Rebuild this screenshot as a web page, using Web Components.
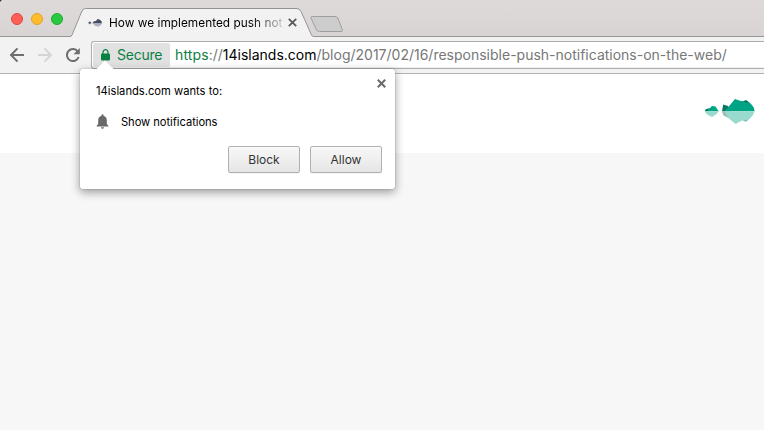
<!DOCTYPE html>
<html lang="en"><head><meta charset="utf-8"><title>Browser window</title>
<style>html,body{margin:0;width:764px;height:430px;overflow:hidden;background:#f7f7f7}</style></head>
<body><browser-window></browser-window>
<script>
const define=(name,html)=>customElements.define(name,class extends HTMLElement{
  constructor(){super();const t=document.createElement('template');t.innerHTML=html;
    this.attachShadow({mode:'open'}).append(t.content.cloneNode(true));}
});

define('window-controls',`<style>
:host{display:flex;gap:8px;padding:13px 0 0 11px;width:60px;box-sizing:border-box;flex:none}
i{box-sizing:border-box;width:12px;height:12px;border-radius:50%;border:1px solid #e2463f;background:#ff5f57;flex:none}
i:nth-of-type(2){background:#ffbd2e;border-color:#e1a325}i:nth-of-type(3){background:#28c940;border-color:#1eac2c}
</style><i></i><i></i><i></i>`);

define('browser-tab',`<style>
:host{display:block;position:relative;width:244px;height:37px;margin-left:10px;flex:none}
.shape{position:absolute;inset:0}
.row{position:relative;display:flex;align-items:center;height:27px;padding:9px 0 0 18px;box-sizing:content-box}
.fav{flex:none;margin-right:6px}
.title{width:174px;white-space:nowrap;overflow:hidden;color:#000;line-height:18px;letter-spacing:.04px;-webkit-mask:linear-gradient(90deg,#000 143px,transparent 180px);mask:linear-gradient(90deg,#000 143px,transparent 180px);flex:none}
.close{flex:none;margin-left:4.5px}
</style>
<svg class="shape" width="244" height="37"><path d="M.5 37L11.2 12Q12.5 8.5 15 8.5H227Q230 8.5 231.3 12L242 35Q242.7 36.5 244 36.5V37Z" fill="#f2f2f2"/><path d="M0 36.5Q1.3 36.5 2 35L11.5 12Q12.8 8.5 15.5 8.5H227Q230 8.5 231.3 12L241.5 35Q242.2 36.5 244 36.5" fill="none" stroke="#949292"/></svg>
<div class="row"><svg class="fav" width="15" height="12" viewBox="0 0 15 12"><path d="M0 5.7L1.8 4.3L3.6 5.8L1.8 7.4Z" fill="#606779"/><path d="M4.6 6L6 4.2L8 4L9.5 2L12 2.8L13.8 4.8V6.4H4.6Z" fill="#454b60"/><path d="M4.6 6.3H14L12.8 8.2L10 9.8L7 8.8Z" fill="#adb2c4"/></svg><span class="title"><slot></slot></span><svg class="close" width="9" height="9" viewBox="0 0 9 9"><path d="M.8 .8L8.2 8.2M8.2 .8L.8 8.2" stroke="#5a5a5a" stroke-width="1.8"/></svg></div>`);

define('tab-strip',`<style>
:host{display:flex;height:37px;background:radial-gradient(circle at 0 0,#3c3033 1px,transparent 2px),linear-gradient(#dedada,#d8d4d4);box-shadow:inset 0 -1px #989696;font:11.8px/18px Inter,"Liberation Sans",sans-serif;flex:none;position:relative}
.new{margin:15px 0 0 -5px;flex:none}
</style><window-controls></window-controls><browser-tab>How we implemented push notifications</browser-tab>
<svg class="new" width="36" height="18"><path d="M3.5 1.5H26Q28 1.5 28.8 3L33.3 14.5Q34 16.5 32 16.5H10.5Q8.2 16.5 7.3 14.5L2 3Q1.5 1.5 3.5 1.5Z" fill="#cecdcd" stroke="#a09e9e"/></svg>`);

define('nav-icons',`<style>:host{display:flex;width:91px;flex:none;align-items:center}svg{display:block}</style>
<svg width="91" height="36" viewBox="0 0 91 36" fill="none" stroke="#6e6e6e" stroke-width="2"><path d="M24 18H11.5M17.5 11.4L11 18L17.5 24.6"/><path d="M38 18H50.5M44.5 11.4L51 18L44.5 24.6" stroke="#d5d5d5"/><path d="M77.8 14.6A6 6 0 1 0 78.6 20"/><path d="M79.8 11V17.3H73.5Z" fill="#6e6e6e" stroke="none"/></svg>`);

define('address-bar',`<style>
:host{display:flex;flex:1;height:28px;box-sizing:border-box;margin-top:4px;border:1px solid #aeaeae;border-right:0;border-radius:3px 0 0 3px;background:#fff;box-shadow:inset 0 -1px #efefef;font:14px/26px Inter,"Liberation Sans",sans-serif;white-space:pre}
.chip{width:77px;box-sizing:border-box;height:24px;line-height:24px;margin:1px 5px 0 1px;background:#e1e1e1;border-radius:2px;display:flex;align-items:center;padding-left:7.5px;color:#0b8043;flex:none}
svg{margin-right:7.5px;flex:none}.secure{letter-spacing:-.25px}
.url{color:#777}.scheme{color:#0b8043;letter-spacing:.12px}.domain{color:#000}
</style><div class="chip"><svg width="9" height="12" viewBox="0 0 9 12"><path d="M2 5V3.2a2.5 2.5 0 0 1 5 0V5" fill="none" stroke="#0b8043" stroke-width="1.2"/><rect y="4.5" width="9" height="7" rx="1" fill="#0b8043"/></svg><span class="secure">Secure</span></div><span class="url"><span class="scheme">https</span>://<span class="domain">14islands.com</span>/blog/2017/02/16/responsible-push-notifications-on-the-web/</span>`);

define('tool-bar',`<style>:host{display:flex;height:37px;box-sizing:border-box;background:#f2f2f2;border-bottom:1px solid #b3b3b3;flex:none}</style><nav-icons></nav-icons><address-bar></address-bar>`);

define('site-header',`<style>:host{display:flex;height:79px;background:#fff;justify-content:flex-end;align-items:flex-start;flex:none}svg{margin:23px 8px 0 0}</style>
<svg width="52" height="29" viewBox="0 0 52 29">
<path d="M.8 14.2L2 12L6 11L8 9L11.5 9.6L14.7 14.2Z" fill="#00a383"/><path d="M.8 14.2L2 12.2L4 12L4.5 14.2Z" fill="#087765"/>
<path d="M1 14.2H14.7L12.5 17L8 20L5 18.5L2.5 17Z" fill="#98dbce"/>
<path d="M18 14.2L19.2 7.5L24 9L27 14.2Z" fill="#087765"/>
<path d="M20.5 14.2L23.5 11L31 2L36 3.8L45 5L48 8L50 11L50.5 14.2Z" fill="#00a383"/><path d="M39 4.2L42 3L44.5 4.8L42.5 6.2Z" fill="#087765"/>
<path d="M18 14.2H50.5L49 18L45.5 22L42 24.5L38 23.5L31.5 27L25 21.5L20 18.5Z" fill="#98dbce"/><path d="M18 14.2H21L24 20.5L19.5 18.5Z" fill="#9fbdb7"/><path d="M39 23.5L42 23L44 23L42 24.8Z" fill="#83bfb3"/></svg>`);

define('dialog-button',`<style>:host{display:flex;align-items:center;justify-content:center;box-sizing:border-box;width:72px;height:27px;border:1px solid #b0b0b0;border-radius:2px;background:linear-gradient(#f7f7f7,#f0f0f0 45%,#e5e5e5);box-shadow:0 1px #0000000a,inset 0 1px #ffffff80;color:#333;font:12px/20px Inter,"Liberation Sans",sans-serif}</style><slot></slot>`);

define('permission-popup',`<style>
:host{position:absolute;left:80px;top:69px;width:315px;height:120px;box-sizing:border-box;border-radius:2px;background:#fff;box-shadow:0 0 1px 0 #0009,0 3px 10px 0 #0006;font:11.2px/18px Inter,"Liberation Sans",sans-serif;color:#000;padding:13px 13px 0 16px}
.arrow{position:absolute;left:15px;top:-9px}
.top{display:flex;justify-content:space-between;height:18px}
.top svg{margin:-3px -3.5px 0 0}
.line{display:flex;align-items:center;height:18px;margin-top:13px;letter-spacing:-.06px}.line svg{margin:0 12.5px 0 -.5px}
.actions{display:flex;justify-content:flex-end;gap:10px;margin-top:15px}
</style><svg class="arrow" width="20" height="10"><path d="M1 9.5L10 .5L19 9.5V10H1Z" fill="#fff"/></svg>
<div class="top"><span>14islands.com wants to:</span><svg width="9" height="9" viewBox="0 0 9 9"><path d="M.8 .8L8.2 8.2M8.2 .8L.8 8.2" stroke="#6a6a6a" stroke-width="2"/></svg></div>
<div class="line"><svg width="13" height="16" viewBox="0 0 13 16"><path d="M5.4 2V1.4a1.1 1.1 0 0 1 2.2 0V2C9.9 2.5 10.8 4.2 10.8 6.2V10L12.3 11.6V12.4H.7V11.6L2.2 10V6.2C2.2 4.2 3.2 2.5 5.4 2ZM5 13.3H8Q7.8 14.8 6.5 14.8T5 13.3Z" fill="#696969"/></svg><span>Show notifications</span></div>
<div class="actions"><dialog-button>Block</dialog-button><dialog-button>Allow</dialog-button></div>`);

define('browser-window',`<style>:host{display:flex;flex-direction:column;position:relative;width:764px;height:430px;background:#f7f7f7;overflow:hidden}</style><tab-strip></tab-strip><tool-bar></tool-bar><site-header></site-header><permission-popup></permission-popup>`);
</script></body></html>
